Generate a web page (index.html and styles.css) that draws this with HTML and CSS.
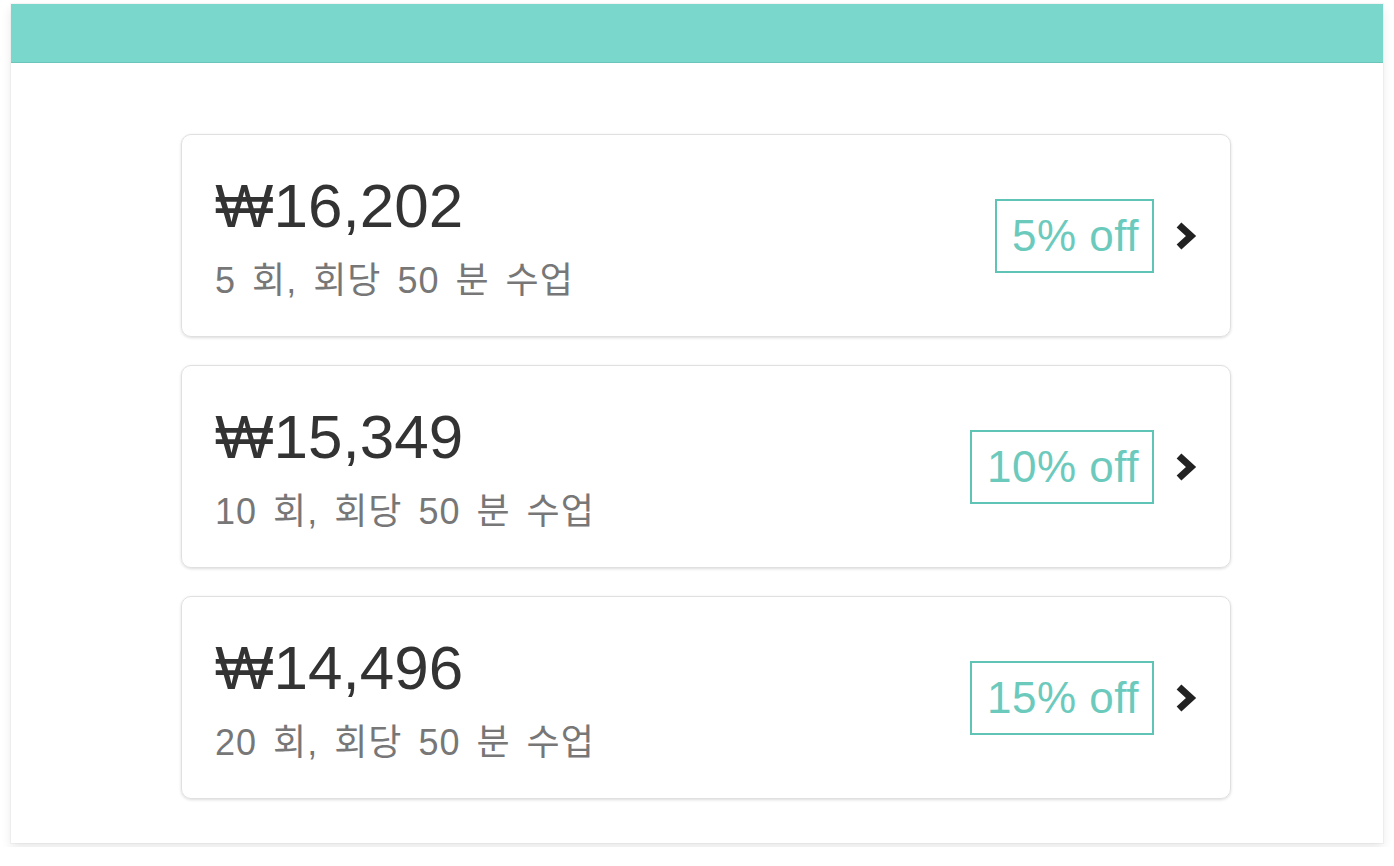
FILE: index.html
```html
<!DOCTYPE html>
<html lang="ko">
<head>
  <meta charset="UTF-8">
  <meta name="viewport" content="width=device-width, initial-scale=1.0">
  <title>수업 패키지</title>
  <link rel="stylesheet" href="styles.css">
</head>
<body>

  <!-- 패키지 선택 카드 -->
  <div class="panel">
    <div class="panel-bar"></div>

    <div class="plan-list">
      <a href="#" class="plan">
        <div class="plan-info">
          <div class="plan-price">₩16,202</div>
          <div class="plan-desc">5 회, 회당 50 분 수업</div>
        </div>
        <span class="plan-badge">5% off</span>
        <svg class="plan-arrow" width="24" height="32" viewBox="0 0 24 32"><polyline points="5,5 17,16 5,27" /></svg>
      </a>

      <a href="#" class="plan">
        <div class="plan-info">
          <div class="plan-price">₩15,349</div>
          <div class="plan-desc">10 회, 회당 50 분 수업</div>
        </div>
        <span class="plan-badge">10% off</span>
        <svg class="plan-arrow" width="24" height="32" viewBox="0 0 24 32"><polyline points="5,5 17,16 5,27" /></svg>
      </a>

      <a href="#" class="plan">
        <div class="plan-info">
          <div class="plan-price">₩14,496</div>
          <div class="plan-desc">20 회, 회당 50 분 수업</div>
        </div>
        <span class="plan-badge">15% off</span>
        <svg class="plan-arrow" width="24" height="32" viewBox="0 0 24 32"><polyline points="5,5 17,16 5,27" /></svg>
      </a>
    </div>
  </div>

</body>
</html>
```

FILE: styles.css
```css
body {
  font-family: "Liberation Sans", "Noto Sans CJK KR", sans-serif;
  margin: 0;
  padding: 4px 11px;
  background-color: #fff;
}
/* 바깥 카드 */
.panel {
  background-color: #fff;
  box-shadow: 0 5px 10px rgba(0, 0, 0, 0.09), 0 0 0 1px rgba(0, 0, 0, 0.03);
  padding-bottom: 44px;
}
.panel-bar {
  height: 58px;
  background-color: #79d7cc;
  border-bottom: 1px solid #6cc5b9;
}
/* 패키지 목록 */
.plan-list {
  display: flex;
  flex-direction: column;
  gap: 28px;
  width: 1050px;
  margin: 71px 0 0 170px;
}
.plan {
  display: flex;
  align-items: center;
  height: 203px;
  box-sizing: border-box;
  padding: 0 32px 0 33px;
  border: 1px solid #e0e0e0;
  border-radius: 10px;
  box-shadow: 0 1px 3px rgba(0, 0, 0, 0.14);
  text-decoration: none;
  color: #333;
}
.plan-info {
  flex: 1;
}
.plan-price {
  font-size: 62px;
  line-height: 72px;
  color: #333;
}
.plan-desc {
  margin-top: 19px;
  font-size: 36px;
  line-height: 40px;
  letter-spacing: 1px;
  word-spacing: 5px;
  color: #777;
}
.plan-badge {
  padding: 0 13px 0 15px;
  border: 2px solid #5fc4b6;
  font-size: 44px;
  line-height: 70px;
  letter-spacing: 0.5px;
  color: #6ccabd;
}
.plan-arrow {
  margin-left: 20px;
  fill: none;
  stroke: #222;
  stroke-width: 7;
}
```
